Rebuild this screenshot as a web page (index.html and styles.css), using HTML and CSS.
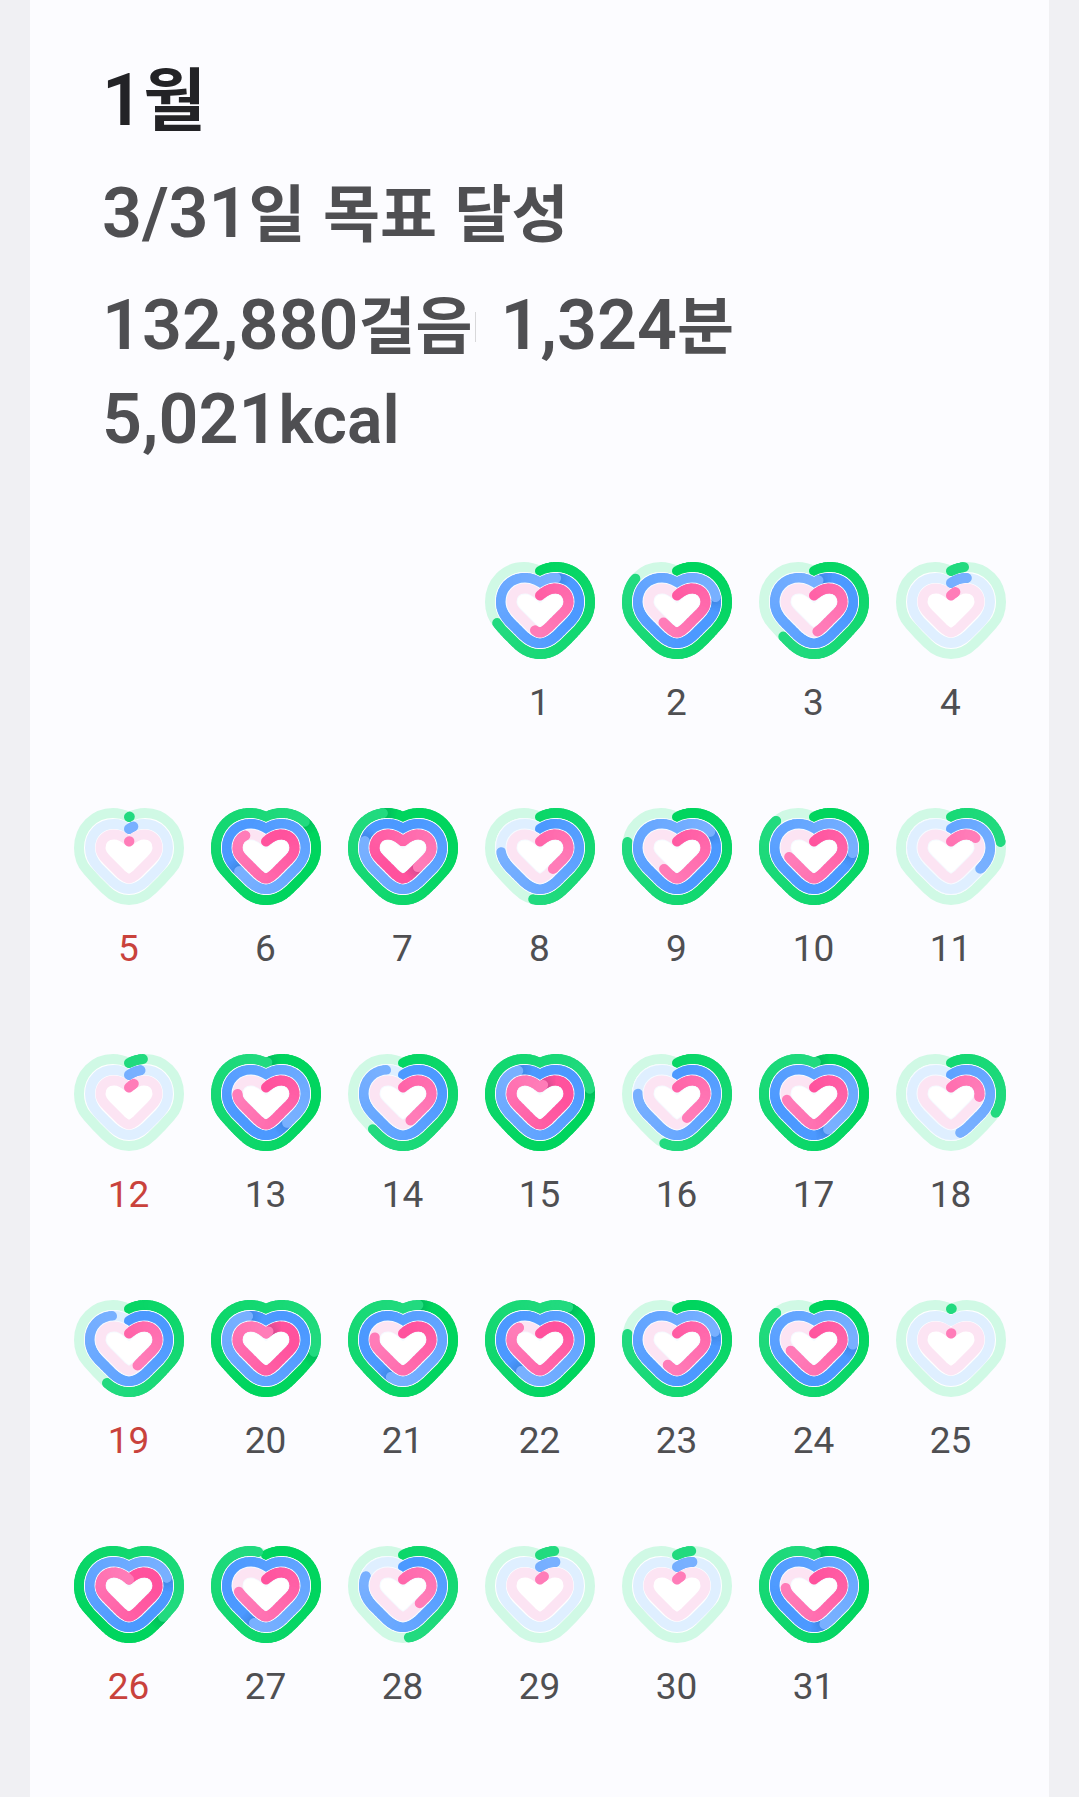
FILE: index.html
```html
<!DOCTYPE html>
<html lang="ko">
<head>
<meta charset="utf-8">
<meta name="viewport" content="width=device-width, initial-scale=1">
<title>1월</title>
<link rel="stylesheet" href="styles.css">
</head>
<body>
<main class="card">
  <header class="summary">
    <h1 class="month">1<span class="hangul">월</span></h1>
    <p class="goal">3/31<span class="hangul">일 목표 달성</span></p>
    <p class="totals">
      <span class="total">132,880<span class="hangul">걸음</span></span>
      <span class="total">1,324<span class="hangul">분</span></span>
      <span class="total">5,021<span class="latin">kcal</span></span>
    </p>
  </header>
  <ol class="days" id="days"></ol>
</main>
<script src="days.js"></script>
</body>
</html>
```
FILE: styles.css
```css
* {
  box-sizing: border-box;
}

body {
  margin: 0;
  padding: 0 30px;
  background: #f0f0f3;
  color: #4f4f52;
  font-family: Roboto, "Noto Sans CJK KR", sans-serif;
}

.card {
  min-height: 100vh;
  padding: 54px 30px 80px;
  background: #fcfcff;
}

.summary {
  display: flex;
  flex-direction: column;
  gap: 18px;
  padding: 0 42px;
  font-size: 70px;
  font-weight: 600;
  line-height: 94px;
}

.month,
.goal,
.totals {
  margin: 0;
  font-size: inherit;
  font-weight: inherit;
}

.month {
  color: #232326;
  font-size: 72px;
  font-weight: 600;
}

.hangul {
  font-family: "Noto Sans CJK KR", sans-serif;
  font-size: 62px;
  font-weight: 700;
  line-height: 1;
}

.month .hangul {
  font-size: 68px;
}

.latin {
  font-size: 66px;
  line-height: 1;
}

.totals {
  display: flex;
  flex-wrap: wrap;
  column-gap: 24px;
}

.total:first-child {
  padding-right: 4px;
  background: linear-gradient(#d8d8da, #d8d8da) right 34px / 1px 30px no-repeat;
}

.days {
  display: grid;
  grid-template-columns: repeat(7, 1fr);
  row-gap: 46px;
  margin: 59px 0 0;
  padding: 0;
  list-style: none;
}

.day {
  display: flex;
  flex-direction: column;
  align-items: center;
  gap: 22px;
  font-size: 37px;
  line-height: 44px;
}

.day:first-child {
  grid-column-start: 4;
}

.sunday {
  color: #c9423c;
}

.heart {
  display: block;
  width: 110px;
  height: 97px;
  margin-top: 37px;
}

.heart path {
  fill: none;
  stroke-width: 10;
}

.heart .backing {
  fill: #fff;
  stroke: none;
}

.heart .separator {
  stroke: #f6fbff;
  stroke-width: 12;
}
```
FILE: days.js
```js
// Progress per day as a percentage of the goal: [steps, active time, calories]
const progress = [
  [68.4, 107.5, 53.4], [84.6, 121.5, 60.5], [62.3, 102.3, 47.8], [4.6, 7.4, 3.4],
  [0.3, 2.2, 0.3], [114, 164.5, 86.1], [193, 179.4, 138.3], [52.3, 74.5, 40],
  [78.1, 116, 60], [86.4, 125.9, 70.4], [21.9, 34, 16.7],
  [4.9, 5.5, 3.7], [100.5, 139, 76.5], [62, 92.1, 44.7], [122.2, 190, 102.5],
  [54.4, 76.4, 42.6], [100.7, 143.2, 72.8], [30.6, 45.8, 25.3],
  [58.2, 92.1, 43.8], [128, 191.7, 102], [105.4, 155.7, 78.1], [109.8, 159.6, 85.8],
  [78.1, 120, 56.8], [86.4, 125.7, 69], [0.3, 0, 0.3],
  [136, 120, 100], [97.1, 155.6, 72.8], [48, 80.7, 36.7], [5, 7.2, 3.1],
  [5, 7.2, 3.1], [100.7, 145.2, 75.3]
];

const rings = [
  {
    track: "#d0f9e5", from: [0, 213, 94], to: [34, 218, 127],
    d: "M55 9C60 6.5 65 5 71 5C90 5 105 20 105 40C105 49 102 56.5 97 62C91 69 85 75.5 78 82C71 89 63 92 55 92C47 92 39 89 32 82C25 75.5 19 69 13 62C8 56.5 5 49 5 40C5 20 20 5 39 5C45 5 50 6.5 55 9"
  },
  {
    track: "#dfefff", from: [76, 153, 255], to: [120, 176, 255],
    d: "M55 21C60 17.5 65 16 70 16C84 16 94 26 94 40C94 48 90.5 54 85.5 59.5L72 73C66 78.5 61 81 55 81C49 81 44 78.5 38 73L24.5 59.5C19.5 54 16 48 16 40C16 26 26 16 40 16C45 16 50 17.5 55 21"
  },
  {
    track: "#fce4f3", from: [255, 82, 157], to: [255, 124, 184],
    d: "M55 33.5C60 29 65 26.5 70 26.5C78 26.5 83.5 32 83.5 40C83.5 45 81 48 77 52L63 66C60 68.5 57.5 70.5 55 70.5C52.5 70.5 50 68.5 47 66L33 52C29 48 26.5 45 26.5 40C26.5 32 32 26.5 40 26.5C45 26.5 50 29 55 33.5"
  }
];

const SVG = "http://www.w3.org/2000/svg";

function addPath(svg, attributes) {
  const path = document.createElementNS(SVG, "path");
  for (const name in attributes) path.setAttribute(name, attributes[name]);
  svg.append(path);
  return path;
}

// Samples the closed outline between two distances; distances may pass one lap.
function slice(outline, length, start, end) {
  const points = [];
  const count = Math.max(1, Math.ceil((end - start) / 1.5));
  for (let i = 0; i <= count; i++) {
    const at = (start + (end - start) * i / count) % length;
    const p = outline.getPointAtLength(at);
    points.push(p.x.toFixed(2) + " " + p.y.toFixed(2));
  }
  return "M" + points.join("L");
}

function drawRing(svg, ring, percent) {
  const outline = addPath(svg, { d: ring.d + "Z", stroke: ring.track, "stroke-linejoin": "round" });
  if (!percent) return;
  const length = outline.getTotalLength();
  const end = length * percent / 100;
  const start = Math.max(0, end - length);
  const step = 4;

  for (let s = start; s < end; s += step) {
    const e = Math.min(end, s + step);
    const t = Math.max(0, 1 - (end - e) / (length * 0.7));
    const rgb = ring.from.map((c, i) => Math.round(c + (ring.to[i] - c) * t));
    addPath(svg, {
      d: slice(outline, length, s, e), stroke: "rgb(" + rgb + ")",
      "stroke-linecap": "round", "stroke-linejoin": "round"
    });

    // Shade the first lap just ahead of the tip that runs over it.
    if (start > 0 && s <= start + 16 && s + step > start + 16) {
      for (let k = 0; k < 14; k++) {
        addPath(svg, {
          d: slice(outline, length, start + k, start + k + 1),
          stroke: "rgba(0,50,90," + (0.18 * (1 - k / 14)).toFixed(3) + ")"
        });
      }
    }
  }
}

const list = document.getElementById("days");
progress.forEach((values, index) => {
  const item = document.createElement("li");
  item.className = index % 7 === 4 ? "day sunday" : "day";
  const svg = document.createElementNS(SVG, "svg");
  svg.setAttribute("class", "heart");
  svg.setAttribute("viewBox", "0 0 110 97");
  svg.setAttribute("aria-hidden", "true");
  item.append(svg);
  const label = document.createElement("span");
  label.textContent = index + 1;
  item.append(label);
  list.append(item);
  addPath(svg, { d: rings[0].d, class: "backing" });
  rings.forEach((ring, i) => {
    if (i > 0 && values[i] > 10) addPath(svg, { d: ring.d + "Z", class: "separator" });
    drawRing(svg, ring, values[i]);
  });
});
```
